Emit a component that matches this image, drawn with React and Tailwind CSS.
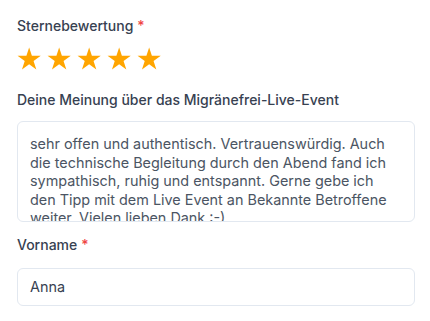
import React from "react";

function Star() {
  const R = 12.2;
  const r = R * 0.382;
  const cx = 12.15;
  const cy = 12.6;
  const pts = [];
  for (let i = 0; i < 10; i++) {
    const rad = i % 2 === 0 ? R : r;
    const a = (Math.PI / 5) * i - Math.PI / 2;
    pts.push(`${(cx + rad * Math.cos(a)).toFixed(2)},${(cy + rad * Math.sin(a)).toFixed(2)}`);
  }
  return (
    <svg width="24.3" height="25" viewBox="0 0 24.3 25" className="block shrink-0">
      <polygon points={pts.join(" ")} fill="#ffa500" />
    </svg>
  );
}

function Label({ children, required }) {
  return (
    <div className="text-[14px] leading-5 font-medium text-[#374151]">
      {children}
      {required && <span className="ml-1 text-[#ef4444]">*</span>}
    </div>
  );
}

export default function App() {
  const lines = [
    "sehr offen und authentisch. Vertrauenswürdig. Auch",
    "die technische Begleitung durch den Abend fand ich",
    "sympathisch, ruhig und entspannt. Gerne gebe ich",
    "den Tipp mit dem Live Event an Bekannte Betroffene",
    "weiter. Vielen lieben Dank :-)",
  ];
  return (
    <div
      className="w-[430px] h-[321px] bg-white px-[17px] pt-4 overflow-hidden"
      style={{ fontFamily: "Inter, 'Noto Sans', sans-serif" }}
    >
      <Label required>Sternebewertung</Label>
      <div className="mt-[11px] flex gap-[5.7px]">
        <Star />
        <Star />
        <Star />
        <Star />
        <Star />
      </div>
      <div className="mt-[18px]">
        <Label>Deine Meinung über das Migränefrei-Live-Event</Label>
      </div>
      <div className="mt-[11px] h-[101px] w-[398px] rounded-md border border-[#e2e8f0] overflow-hidden px-3 pt-[13px] text-[14.4px] leading-[18.5px] text-[#4b5563]">
        {lines.map((l, i) => (
          <div key={i} className="whitespace-nowrap">
            {l}
          </div>
        ))}
      </div>
      <div className="mt-[13px]">
        <Label required>Vorname</Label>
      </div>
      <div className="mt-[13px] h-[38px] w-[398px] rounded-md border border-[#e2e8f0] px-3 flex items-center text-[14.4px] text-[#374151]">
        Anna
      </div>
    </div>
  );
}
